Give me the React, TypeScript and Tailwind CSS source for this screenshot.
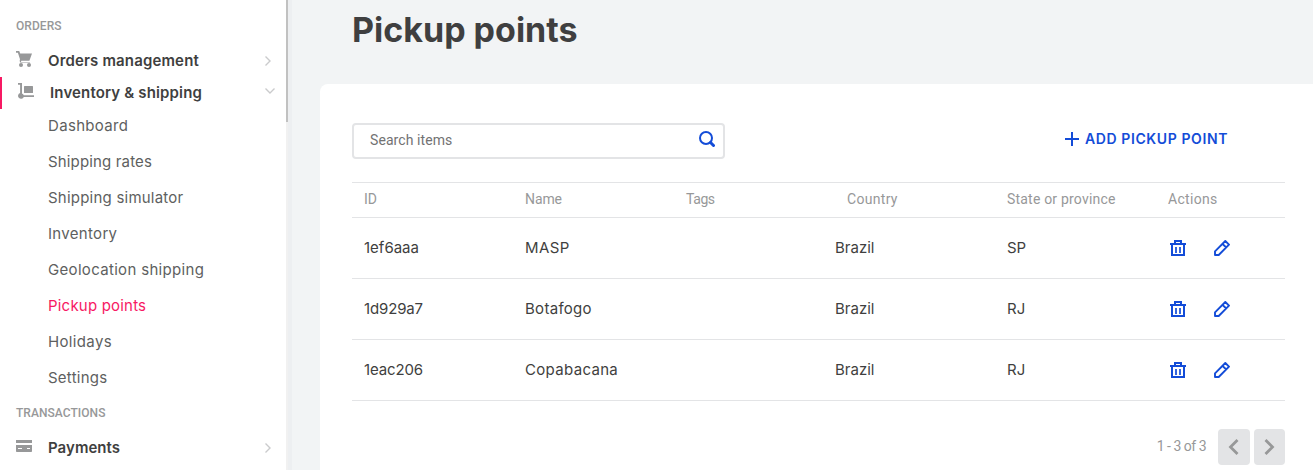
import React from "react";

const subItems = [
  { label: "Dashboard", track: "tracking-[0.32px]" },
  { label: "Shipping rates", track: "tracking-[0.15px]" },
  { label: "Shipping simulator", track: "tracking-[0.22px]" },
  { label: "Inventory", track: "tracking-[0.32px]" },
  { label: "Geolocation shipping", track: "tracking-[0.32px]" },
  { label: "Pickup points", track: "tracking-[0.2px]", active: true },
  { label: "Holidays", track: "tracking-[0.35px]" },
  { label: "Settings", track: "tracking-[0.25px]" },
];

const headers = [
  { label: "ID", track: "tracking-normal" },
  { label: "Name", track: "tracking-[-0.1px]" },
  { label: "Tags", track: "tracking-[-0.4px]" },
  { label: "Country", track: "tracking-[0.3px]" },
  { label: "State or province", track: "tracking-[0.2px]" },
  { label: "Actions", track: "tracking-[0.3px]" },
];

const rows = [
  { id: "1ef6aaa", name: "MASP", country: "Brazil", state: "SP", idTrack: "tracking-normal", nameTrack: "tracking-[0.4px]" },
  { id: "1d929a7", name: "Botafogo", country: "Brazil", state: "RJ", idTrack: "tracking-[-0.15px]", nameTrack: "tracking-[0.3px]" },
  { id: "1eac206", name: "Copabacana", country: "Brazil", state: "RJ", idTrack: "tracking-[-0.15px]", nameTrack: "tracking-[0.32px]" },
];

const columns = "grid grid-cols-[161px_161px_161px_160px_161px_129px]";

function CartIcon() {
  return (
    <svg className="h-4 w-4" viewBox="0 0 16 16" fill="#979899">
      <path d="M0 0h3.200l1 2.600H16L13.400 9.800H5.300L5 11H14v.5H4L3.700 9.500 4 8.300 1.900 1.700H0z" />
      <circle cx="5" cy="14" r="2" />
      <circle cx="13" cy="14" r="2" />
    </svg>
  );
}

function TrolleyIcon() {
  return (
    <svg className="h-4 w-4" viewBox="0 0 16 16" fill="#979899">
      <path d="M0 0h4v10.400a3 3 0 0 1 1.800 1.900H16v1.800H5.800A3 3 0 1 1 2.100 10V1.700H0z" />
      <rect x="6" y="3" width="9" height="7" rx=".5" />
    </svg>
  );
}

function CardIcon() {
  return (
    <svg className="h-3 w-4" viewBox="0 0 16 12" fill="#979899">
      <path d="M0 0h16v3H0z" />
      <path fillRule="evenodd" d="M0 5h16v6.200q0 .8-.8.8H.8Q0 12 0 11.200zM2 8v1h4V8zM11 8v1h3V8z" />
    </svg>
  );
}

function Chevron({ down = false }: { down?: boolean }) {
  return down ? (
    <svg className="h-[6px] w-[10px]" viewBox="0 0 10 6" fill="none" stroke="#cacbcc" strokeWidth="1.4">
      <path d="M.5.5 5 5 9.500.5" />
    </svg>
  ) : (
    <svg className="h-[10px] w-[6px]" viewBox="0 0 6 10" fill="none" stroke="#cacbcc" strokeWidth="1.4">
      <path d="M.5.5 5 5 .5 9.500" />
    </svg>
  );
}

function TrashIcon() {
  return (
    <svg className="h-4 w-4" viewBox="0 0 16 16" fill="none" stroke="#134cd8" strokeWidth="2">
      <path d="M0 4h16M2 4v11h12V4M5 3.500V1h6v2.500" />
      <path d="M6 7v6M10 7v6" strokeWidth="1.700" />
    </svg>
  );
}

function PencilIcon() {
  return (
    <svg className="h-4 w-4" viewBox="0 0 16 16" fill="none" stroke="#134cd8" strokeWidth="1.900" strokeLinejoin="round">
      <path d="M1 11.300 11.300 1 15 4.700 4.700 15H1zM8.500 3.800l3.700 3.700" />
    </svg>
  );
}

function MenuRow({
  icon,
  label,
  track,
}: {
  icon: React.ReactNode;
  label: string;
  track: string;
}) {
  return (
    <div className="flex h-8 items-center pl-4">
      <span className="mb-1 flex w-8 items-center">{icon}</span>
      <span className={`flex-1 pt-px text-[15px] font-semibold text-[#3f3f40] ${track}`}>{label}</span>
      <span className="mr-[15px] flex">
        <Chevron />
      </span>
    </div>
  );
}

export default function App() {
  return (
    <div className="flex h-[470px] w-[1313px] overflow-hidden bg-[#f2f4f5] font-['Inter',sans-serif] whitespace-nowrap">
      <nav className="flex w-[286px] flex-none flex-col bg-white">
        <div className="mt-[10px] flex h-8 items-center pl-4 font-['Roboto',sans-serif] text-[12px] font-medium tracking-[0.05px] text-[#979899]">
          ORDERS
        </div>
        <div className="mt-[3px]">
          <MenuRow icon={<CartIcon />} label="Orders management" track="tracking-[0.15px]" />
        </div>
        <div className="flex h-8 items-center border-l-2 border-[#f71963] pl-4">
          <span className="mb-1 flex w-8">
            <TrolleyIcon />
          </span>
          <span className="flex-1 pt-px text-[15px] font-semibold tracking-[0.15px] text-[#3f3f40]">Inventory &amp; shipping</span>
          <span className="mr-[11px] mb-1 flex">
            <Chevron down />
          </span>
        </div>
        <ul className="-mt-px">
          {subItems.map((item) => (
            <li
              key={item.label}
              className={`flex h-9 items-center pl-12 text-[15px] ${item.track} ${item.active ? "text-[#f71963]" : "text-[#5e5f60]"}`}
            >
              {item.label}
            </li>
          ))}
        </ul>
        <div className="mt-px flex h-8 items-center pl-4 font-['Roboto',sans-serif] text-[12px] font-medium tracking-[0.05px] text-[#979899]">
          TRANSACTIONS
        </div>
        <div className="mt-[3px]">
          <MenuRow icon={<CardIcon />} label="Payments" track="tracking-[0.05px]" />
        </div>
      </nav>
      <div className="w-[6px] flex-none border-l-2 border-[#f1f1f1] bg-[#edeff1]">
        <div className="-ml-[2px] h-[122px] w-[2px] bg-[#c1c1c1]" />
      </div>

      <main className="flex flex-1 flex-col pl-7">
        <h1 className="h-[84px] pt-[8px] pl-8 text-[34px] leading-[44px] font-bold text-[#3f3f40]">Pickup points</h1>
        <section className="flex-1 rounded-tl-lg bg-white pt-[39px] pr-7 pl-8">
          <div className="flex h-9 items-center justify-between">
            <div className="flex h-9 w-[373px] items-center justify-between rounded border-2 border-[#e3e4e6] pr-2 pl-4">
              <span className="mb-[2px] font-['Roboto',sans-serif] text-[14px] tracking-[0.08px] text-[#727273]">Search items</span>
              <svg className="mb-1 h-4 w-4" viewBox="0 0 16 16" fill="none" stroke="#134cd8">
                <circle cx="7" cy="7" r="6" strokeWidth="2" />
                <path d="m11.500 11.500 3 3" strokeWidth="3" strokeLinecap="round" />
              </svg>
            </div>
            <button className="mr-[57px] mb-[5px] flex items-center gap-[6px] text-[14px] font-semibold text-[#134cd8]">
              <svg className="h-[14px] w-[14px]" viewBox="0 0 14 14" stroke="#134cd8" strokeWidth="2">
                <path d="M7 0v14M0 7h14" />
              </svg>
              <span className="tracking-[0.6px]">ADD PICKUP POINT</span>
            </button>
          </div>

          <div className="mt-[23px] border-t border-[#e3e4e6]">
            <div className={`${columns} h-[35px] items-center border-b border-[#e3e4e6] pb-px font-['Roboto',sans-serif] text-[14px] text-[#979899]`}>
              {headers.map((h) => (
                <span key={h.label} className={`pl-3 ${h.track}`}>
                  {h.label}
                </span>
              ))}
            </div>
            {rows.map((row) => (
              <div key={row.id} className={`${columns} h-[61px] items-center border-b border-[#e3e4e6] text-[15px] text-[#3f3f40]`}>
                <span className={`pl-3 ${row.idTrack}`}>{row.id}</span>
                <span className={`pl-3 ${row.nameTrack}`}>{row.name}</span>
                <span />
                <span>{row.country}</span>
                <span className="pl-3">{row.state}</span>
                <span className="flex gap-7 pl-[14px]">
                  <TrashIcon />
                  <PencilIcon />
                </span>
              </div>
            ))}
          </div>

          <div className="mt-7 flex items-center justify-end gap-1">
            <span className="mr-2 mb-px font-['Roboto',sans-serif] text-[14px] tracking-[-0.5px] text-[#979899]">1 - 3 of 3</span>
            <button className="flex h-9 w-8 items-center justify-center rounded bg-[#e3e4e6] pr-px">
              <svg className="h-4 w-[11px]" viewBox="0 0 11 16" fill="none" stroke="#979899" strokeWidth="2.800">
                <path d="M9.500 1 2.500 8l7 7" />
              </svg>
            </button>
            <button className="flex h-9 w-[31px] items-center justify-center rounded bg-[#e3e4e6]">
              <svg className="h-4 w-[11px]" viewBox="0 0 11 16" fill="none" stroke="#979899" strokeWidth="2.800">
                <path d="m1.500 1 7 7-7 7" />
              </svg>
            </button>
          </div>
        </section>
      </main>
    </div>
  );
}
